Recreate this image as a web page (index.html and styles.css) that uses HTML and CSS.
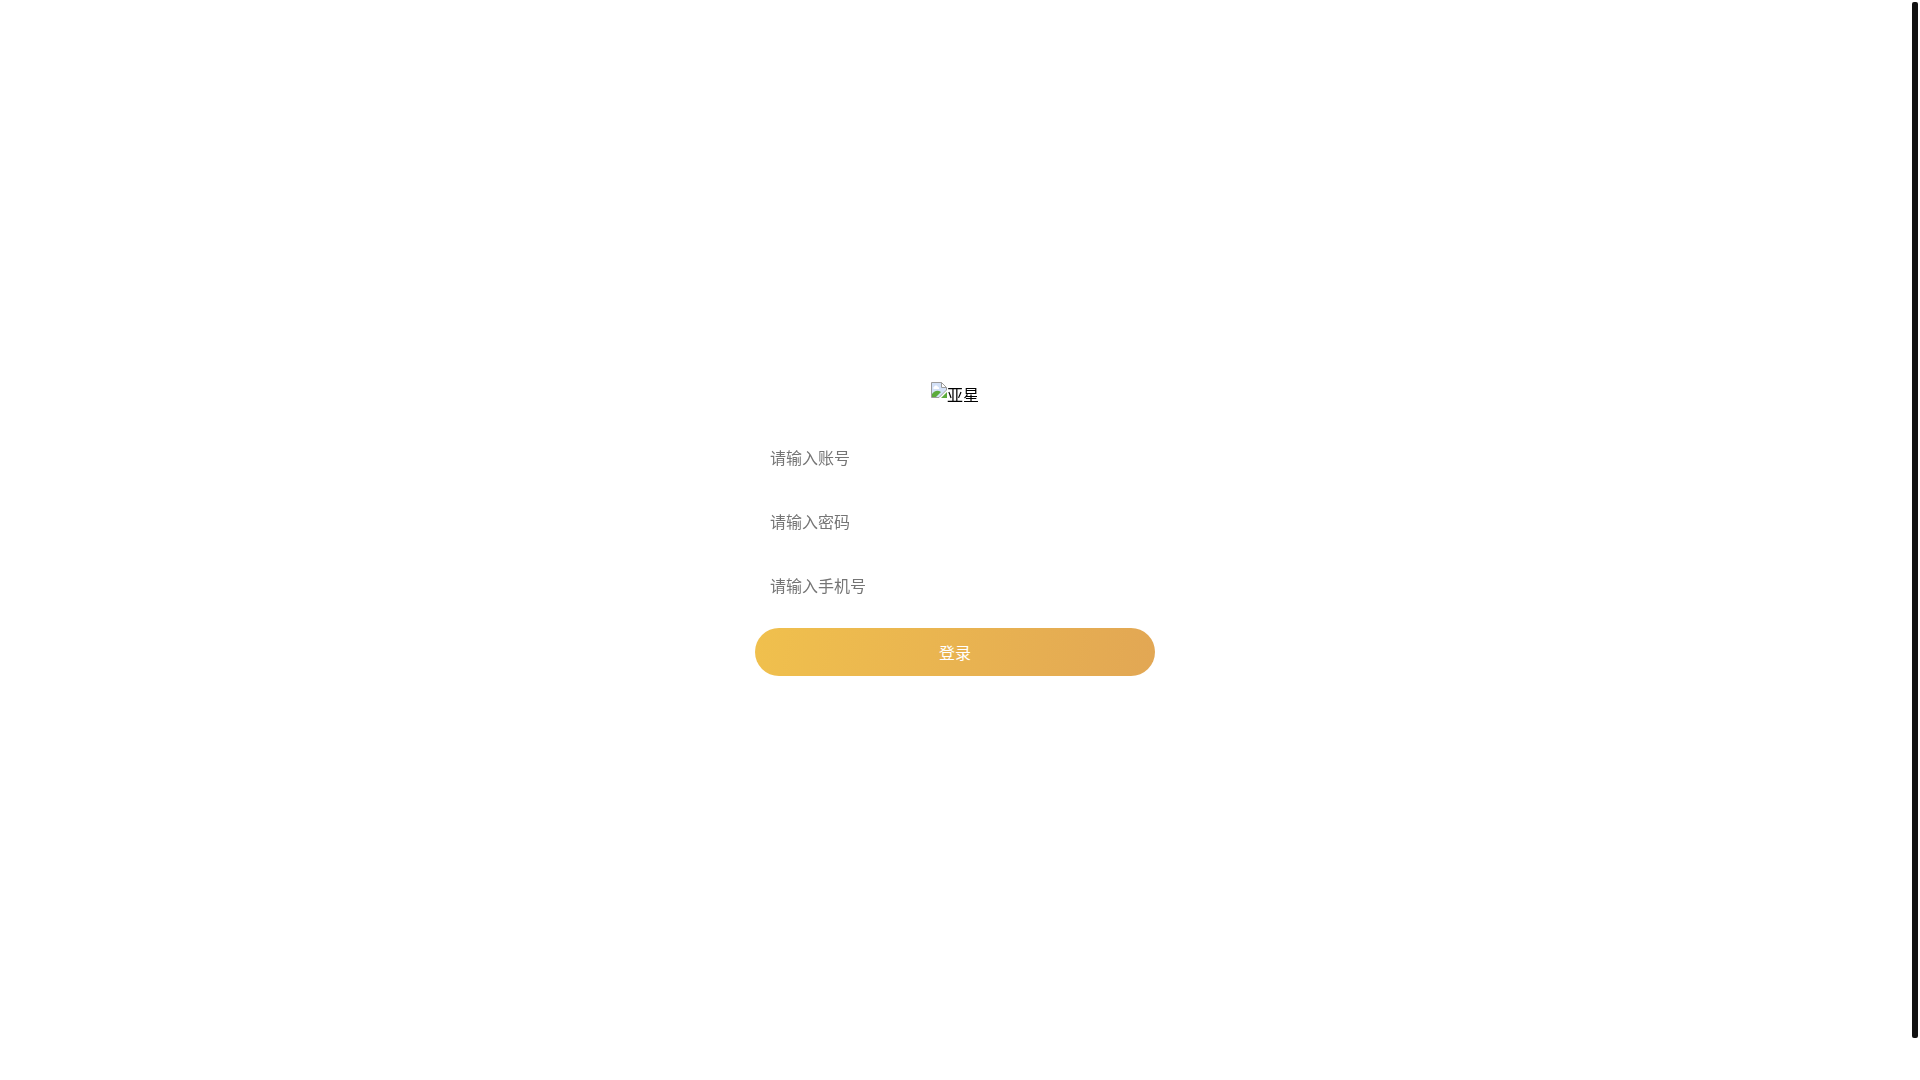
FILE: index.html
```html
<!DOCTYPE html>
<html lang="zh-CN">
<head>
    <meta charset="UTF-8">
    <meta name="viewport" content="width=device-width, initial-scale=1.0">
    <title>亚星</title>
    <link rel="stylesheet" href="styles.css">
</head>
<body>
    <main class="page">
        <form class="login">
            <div class="logo">
                <svg class="broken-img" width="16" height="16" viewBox="0 0 16 16">
                    <path d="M0.500 0.500H10.500L15.500 5.500V8L8 15.500H0.500Z" fill="#d3e1f7" stroke="#9c9c9c"/>
                    <path d="M10.500 0.500V5.500H15.500Z" fill="#fff" stroke="#9c9c9c"/>
                    <path d="M3 5C4 3 6 3 7 5C8 5 8.500 6 8 7H3C2 7 2 5 3 5Z" fill="#fff"/>
                    <path d="M1 15V12C4 8 7 8 10 10L5 15Z" fill="#5cab3c"/>
                    <path d="M16 10V16H10Z" fill="#5cab3c"/>
                </svg><span>亚星</span>
            </div>
            <input class="field" type="text" placeholder="请输入账号">
            <input class="field" type="password" placeholder="请输入密码">
            <input class="field" type="text" placeholder="请输入手机号">
            <button class="submit" type="button">登录</button>
        </form>
    </main>
    <div class="scrollbar"><div class="thumb"></div></div>
</body>
</html>
```

FILE: styles.css
```css
*,*::after,*::before{
    box-sizing: border-box;
}
body{
    margin: 0;
    height: 100vh;
    overflow: hidden;
    display: flex;
    background: #fff;
    font-family: "Noto Sans CJK SC", "Liberation Sans", sans-serif;
    font-size: 16px;
    color: #000;
}
.page{
    flex: 1;
    display: flex;
    justify-content: center;
    padding-top: 382px;
}
.login{
    width: 400px;
    display: flex;
    flex-direction: column;
    will-change: opacity;
}
.logo{
    height: 36px;
    margin-bottom: 16px;
    display: flex;
    justify-content: center;
    align-items: flex-start;
    line-height: 24px;
}
.broken-img{
    display: block;
}
.logo span{
    width: 32px;
}
.field{
    height: 48px;
    margin-bottom: 16px;
    padding: 0 15px 2px;
    border: none;
    outline: none;
    background: transparent;
    font: inherit;
}
.field::placeholder{
    color: #757575;
}
.field:nth-of-type(3){
    margin-bottom: 18px;
}
.submit{
    height: 48px;
    border: none;
    border-radius: 24px;
    background: linear-gradient(100deg, #f0c04d, #e2a754);
    color: #fff;
    font: inherit;
    padding: 0;
}
.scrollbar{
    width: 10px;
    padding: 2px 2px 42px 2px;
}
.thumb{
    height: 100%;
    border-radius: 2px;
    background: #111;
}
```
